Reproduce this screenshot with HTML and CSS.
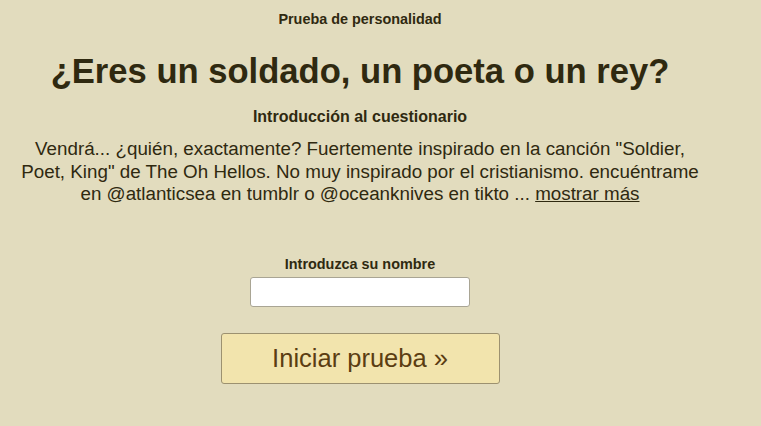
FILE: index.html
```html
<!DOCTYPE html>
<html lang="es">
<head>
<meta charset="utf-8">
<title>¿Eres un soldado, un poeta o un rey?</title>
<link rel="stylesheet" href="styles.css">
</head>
<body>
<main class="quiz">
  <div class="kicker">Prueba de personalidad</div>
  <h1 class="title">¿Eres un soldado, un poeta o un rey?</h1>
  <h2 class="subhead">Introducción al cuestionario</h2>
  <p class="desc">Vendrá... ¿quién, exactamente? Fuertemente inspirado en la canción "Soldier, Poet, King" de The Oh Hellos. No muy inspirado por el cristianismo. encuéntrame en @atlanticsea en tumblr o @oceanknives en tikto ... <a class="more" href="#">mostrar más</a></p>
  <form class="start">
    <label class="label" for="name">Introduzca su nombre</label>
    <input class="name" id="name" type="text">
    <button class="go" type="button">Iniciar prueba »</button>
  </form>
</main>
</body>
</html>
```
FILE: styles.css
```css
html, body {
  margin: 0;
  padding: 0;
  background: #e2dcbe;
  height: 100%;
}
body {
  font-family: "Liberation Sans", Arial, sans-serif;
  color: #2f2910;
}
.quiz {
  width: 720px;
  text-align: center;
  display: flex;
  flex-direction: column;
  align-items: center;
}
.kicker {
  font-size: 14.4px;
  font-weight: bold;
  line-height: 15px;
  margin-top: 12px;
}
.title {
  font-size: 34.6px;
  font-weight: bold;
  line-height: 36px;
  margin: 26px 0 0;
  white-space: nowrap;
}
.subhead {
  font-size: 16px;
  font-weight: bold;
  line-height: 17px;
  margin: 19px 0 0;
}
.desc {
  font-size: 18.8px;
  line-height: 22.5px;
  margin: 13px 0 0;
  width: 697px;
}
.more {
  color: inherit;
  text-decoration: underline;
}
.start {
  display: flex;
  flex-direction: column;
  align-items: center;
  margin-top: 51px;
}
.label {
  font-size: 14.4px;
  font-weight: bold;
  line-height: 15px;
}
.name {
  box-sizing: border-box;
  width: 220px;
  height: 30px;
  margin-top: 5px;
  background: #fff;
  border: 1px solid #a9a594;
  border-radius: 3px;
  padding: 0 6px;
  font-family: inherit;
  font-size: 14px;
}
.go {
  box-sizing: border-box;
  width: 279px;
  height: 51px;
  margin-top: 26px;
  background: #f2e4ad;
  border: 1px solid #9c9170;
  border-radius: 3px;
  font-family: inherit;
  font-size: 25.5px;
  color: #5b3d12;
  cursor: pointer;
}
```
